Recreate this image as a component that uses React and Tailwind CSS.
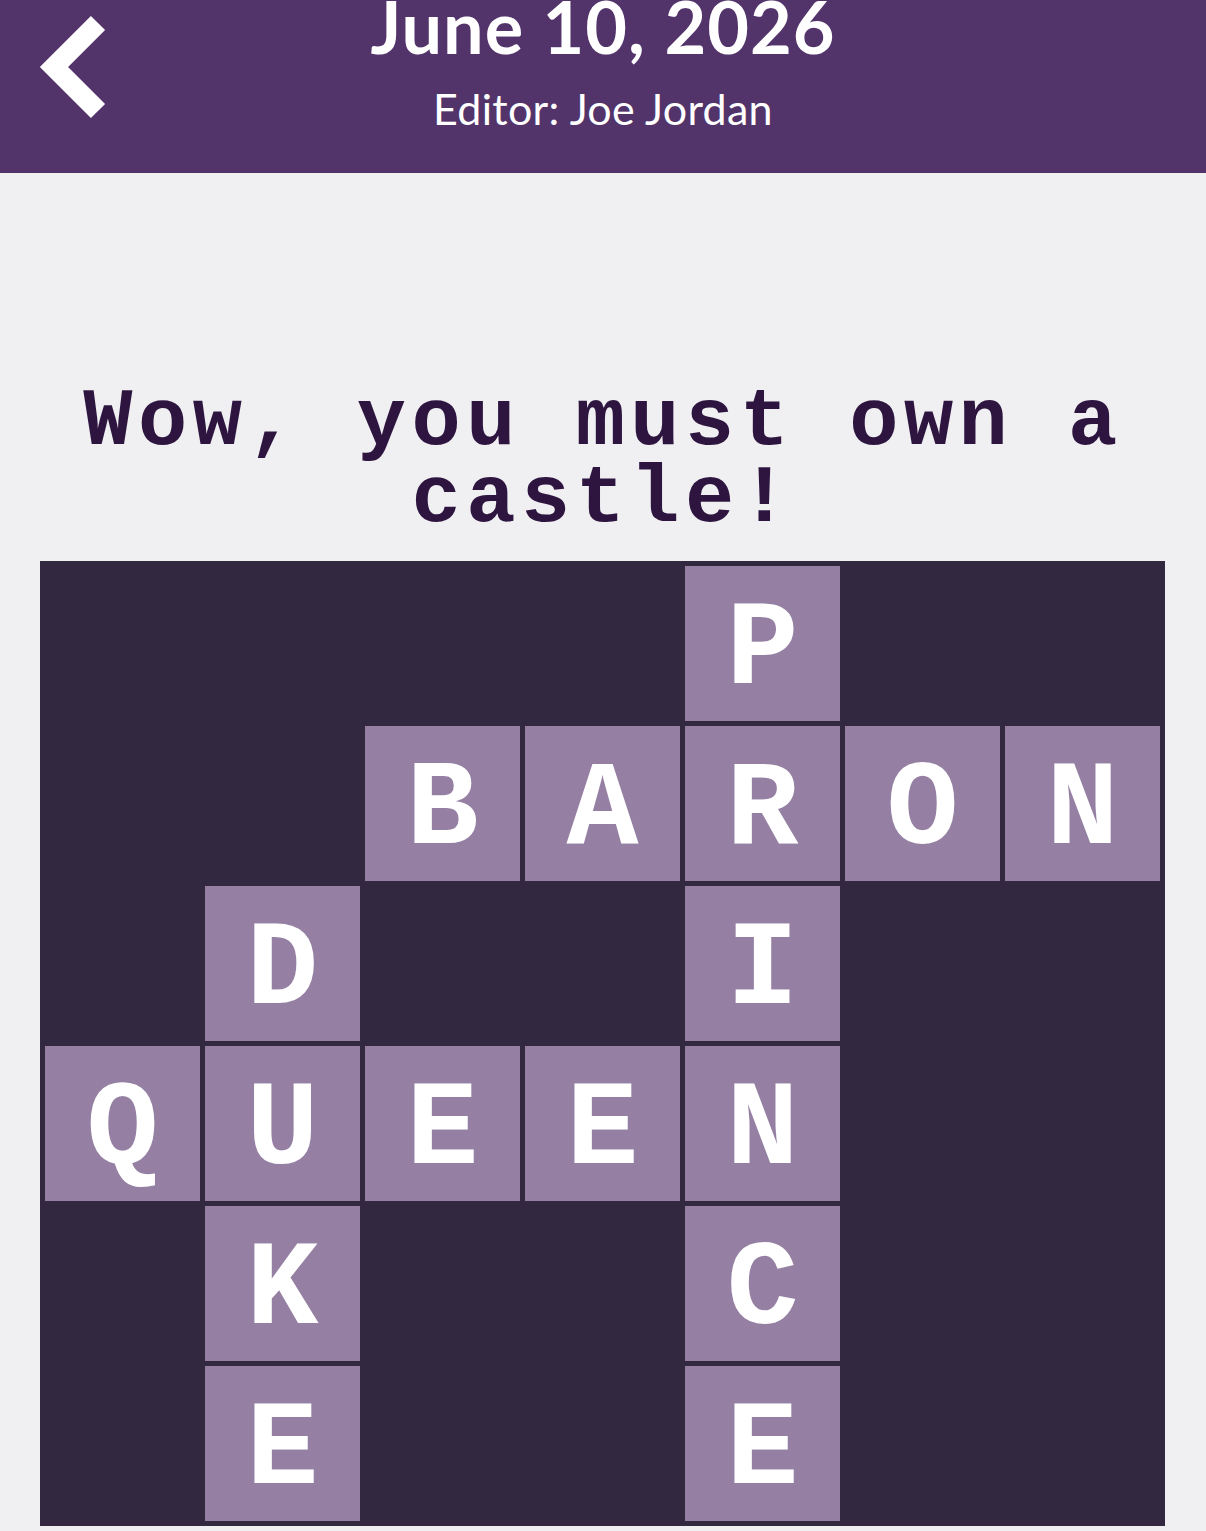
import React from 'react';

// grid de la solution : 7 colonnes × 6 lignes, '' = case vide
const GRID = [
  ['', '', '', '', 'P', '', ''],
  ['', '', 'B', 'A', 'R', 'O', 'N'],
  ['', 'D', '', '', 'I', '', ''],
  ['Q', 'U', 'E', 'E', 'N', '', ''],
  ['', 'K', '', '', 'C', '', ''],
  ['', 'E', '', '', 'E', '', ''],
];

const MONO = '"Courier New", "Nimbus Mono PS", "Nimbus Mono L", FreeMono, "Liberation Mono", monospace';

const Chevron = () => (
  <svg width="70" height="104" viewBox="0 0 70 104" fill="none">
    <path d="M60 8 L16 52 L60 96" stroke="white" strokeWidth="20" strokeLinejoin="miter" strokeLinecap="butt" />
  </svg>
);

const App = () => {
  return (
    <div className="min-h-[1531px] w-[1206px] bg-[#f0eff2]">
      {/* Header */}
      <div className="h-[173px] bg-[#52346b] relative flex flex-col items-center overflow-hidden" style={{ fontFamily: 'Lato, "Open Sans", sans-serif' }}>
        <div className="absolute left-[38px] top-[15px]">
          <Chevron />
        </div>
        <div className="text-white font-bold text-[72px] tracking-[1px] leading-none mt-[-10px]">June 10, 2026</div>
        <div className="text-white text-[43px] tracking-[0.3px] leading-none mt-[25px]">Editor: Joe Jordan</div>
      </div>

      {/* Indice */}
      <div className="pt-[211px] px-[30px]">
        <h1 className="text-center text-[#2d1540] font-bold text-[82px] tracking-[5.5px] leading-[77px]" style={{ fontFamily: MONO }}>
          Wow, you must own a castle!
        </h1>
      </div>

      {/* Grille */}
      <div className="mt-[23px] ml-[40px] w-[1125px] bg-[#322840] p-[5px] grid grid-cols-[repeat(7,155px)] grid-rows-[repeat(6,155px)] gap-[5px]">
        {GRID.flat().map((ch, i) => (
          ch ? (
            <div key={i} className="bg-[#9580a3] flex items-center justify-center pt-[14px] text-white font-bold text-[120px] leading-none"
              style={{ fontFamily: MONO }}>
              {ch}
            </div>
          ) : <div key={i} />
        ))}
      </div>
    </div>
  );
};

export default App;
